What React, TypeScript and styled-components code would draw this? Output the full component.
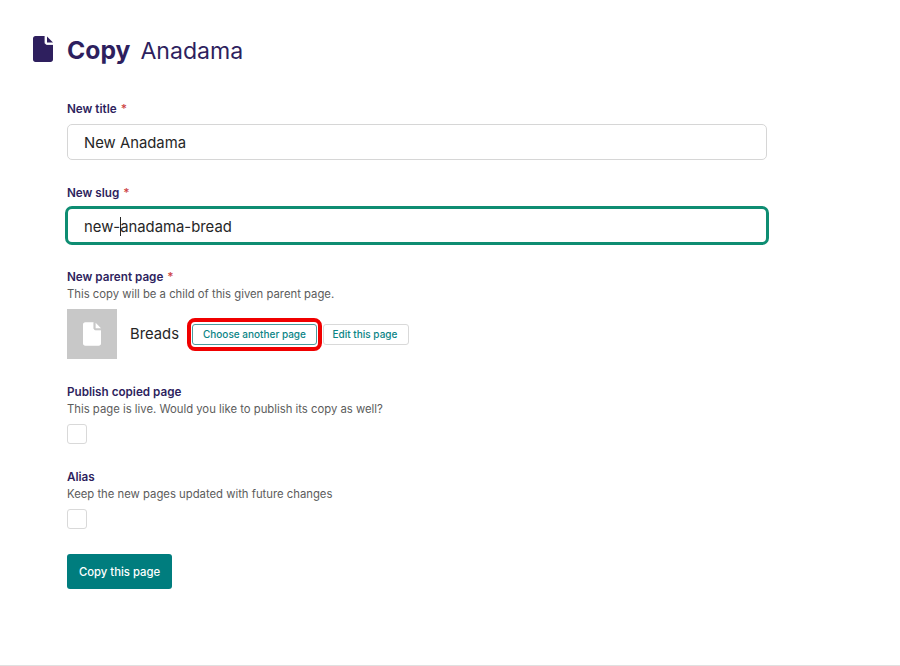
import { FC, ReactNode } from 'react';
import styled, { createGlobalStyle } from 'styled-components';

const GlobalStyle = createGlobalStyle`
    html, body {
        margin: 0;
        background: #fff;
    }
    body {
        font-family: Inter, "Liberation Sans", sans-serif;
    }
`;

const Page = styled.div`
    width: 900px;
    height: 666px;
    box-sizing: border-box;
    border-bottom: 1px solid #e0e0e0;
    padding: 36px 0 0 33px;
    overflow: hidden;
`;

const Header = styled.header`
    display: flex;
    align-items: flex-start;
    gap: 14px;
    height: 66px;
    color: #2e1f5e;
`;

const Title = styled.h1`
    margin: -1px 0 0;
    display: flex;
    align-items: baseline;
    gap: 10px;
    font-size: 23.1px;
    line-height: 30px;
    font-weight: 400;
`;

const TitleStrong = styled.strong`
    font-size: 24.7px;
    font-weight: 700;
`;

const Form = styled.form`
    margin-left: 34px;
    width: 700px;
    display: flex;
    flex-direction: column;
`;

const Field = styled.div<{ $gap: number }>`
    margin-bottom: ${p => p.$gap}px;
`;

const Label = styled.label`
    display: block;
    height: 15px;
    font-size: 11.7px;
    line-height: 15px;
    font-weight: 600;
    color: #2e1f5e;
`;

const Required = styled.span`
    color: #cd4444;
    margin-left: 4px;
`;

const Help = styled.p`
    margin: 2px 0 0;
    height: 15px;
    font-size: 11.3px;
    line-height: 15px;
    color: #5c5c5c;
`;

const Input = styled.div<{ $focused?: boolean }>`
    box-sizing: border-box;
    height: ${p => (p.$focused ? 35 : 36)}px;
    margin-top: 7px;
    padding: 1px ${p => (p.$focused ? 17 : 16)}px 0;
    display: flex;
    align-items: center;
    border: ${p => (p.$focused ? '0' : '1.5px solid #d6d6d6')};
    border-radius: 5px;
    outline: ${p => (p.$focused ? '3px solid #0e8d72' : 'none')};
    outline-offset: ${p => (p.$focused ? '-1px' : '0')};
    font-size: 14.85px;
    color: #262626;
`;

const Caret = styled.span`
    display: inline-block;
    width: 1px;
    height: 19px;
    margin-right: -1px;
    background: #262626;
    vertical-align: -4px;
`;

const Chooser = styled.div`
    display: flex;
    align-items: center;
    margin-top: 7px;
    height: 50px;
`;

const Thumb = styled.div`
    width: 50px;
    height: 50px;
    background: #c8c8c8;
    display: flex;
    align-items: center;
    justify-content: center;
`;

const PageName = styled.span`
    margin: 0 8px 0 13px;
    font-size: 14.8px;
    color: #262626;
`;

const HighlightBox = styled.span`
    display: inline-flex;
    padding: 2px 1px;
    margin-right: 1px;
    border: 4px solid #f00000;
    border-radius: 8px;
`;

const SmallButton = styled.button`
    height: 21px;
    width: 86px;
    padding: 0 2px 0 0;
    box-sizing: border-box;
    background: #fff;
    border: 1px solid #d9d9d9;
    border-radius: 3px;
    color: #0a8485;
    font: 500 10px Inter, sans-serif;
    white-space: nowrap;
`;

const ChooseButton = styled(SmallButton)`
    width: 125px;
    padding: 0;
    border: 1.5px solid #4a9c9d;
`;

const Checkbox = styled.span`
    display: block;
    box-sizing: border-box;
    width: 20px;
    height: 20px;
    margin-top: 7px;
    border: 1.5px solid #d9d9d9;
    border-radius: 3px;
`;

const Submit = styled.button`
    align-self: flex-start;
    width: 105px;
    height: 35px;
    background: #007d7e;
    border: 0;
    border-radius: 3px;
    color: #fff;
    font: 500 11.3px Inter, sans-serif;
`;

const FileIcon: FC<{ size: number; height: number; fill: string; cut: string }> = ({ size, height, fill, cut }) => (
    <svg width={size} height={height} viewBox="0 0 20 26" aria-hidden="true">
        <path
            d="M2.5 0H12V6.5C12 7.6 12.9 8.5 14 8.5H20V23.5C20 24.9 18.9 26 17.5 26H2.5C1.1 26 0 24.9 0 23.5V2.5C0 1.1 1.1 0 2.5 0Z"
            fill={fill}
        />
        <path d="M14 0.5L20 6.5H14Z" fill={fill} />
        <path d="M12 0V6.5C12 7.6 12.9 8.5 14 8.5H20" fill="none" stroke={cut} strokeWidth="0.8" />
    </svg>
);

const FormField: FC<{ label: string; required?: boolean; help?: string; gap: number; children: ReactNode }> = ({
    label,
    required,
    help,
    gap,
    children
}) => (
    <Field $gap={gap}>
        <Label>
            {label}
            {required && <Required>*</Required>}
        </Label>
        {help && <Help>{help}</Help>}
        {children}
    </Field>
);

export default function App() {
    return (
        <Page>
            <GlobalStyle />
            <Header>
                <FileIcon size={20} height={26} fill="#2e1f5e" cut="#ffffff" />
                <Title>
                    <TitleStrong>Copy</TitleStrong> Anadama
                </Title>
            </Header>
            <Form>
                <FormField label="New title" required gap={26}>
                    <Input>New Anadama</Input>
                </FormField>
                <FormField label="New slug" required gap={27}>
                    <Input $focused>
                        <span>
                            new-
                            <Caret />
                            anadama-bread
                        </span>
                    </Input>
                </FormField>
                <FormField
                    label="New parent page"
                    required
                    help="This copy will be a child of this given parent page."
                    gap={26}
                >
                    <Chooser>
                        <Thumb>
                            <FileIcon size={18} height={24} fill="#ffffff" cut="#c8c8c8" />
                        </Thumb>
                        <PageName>Breads</PageName>
                        <HighlightBox>
                            <ChooseButton type="button">Choose another page</ChooseButton>
                        </HighlightBox>
                        <SmallButton type="button">Edit this page</SmallButton>
                    </Chooser>
                </FormField>
                <FormField
                    label="Publish copied page"
                    help="This page is live. Would you like to publish its copy as well?"
                    gap={26}
                >
                    <Checkbox />
                </FormField>
                <FormField label="Alias" help="Keep the new pages updated with future changes" gap={25}>
                    <Checkbox />
                </FormField>
                <Submit type="button">Copy this page</Submit>
            </Form>
        </Page>
    );
}
